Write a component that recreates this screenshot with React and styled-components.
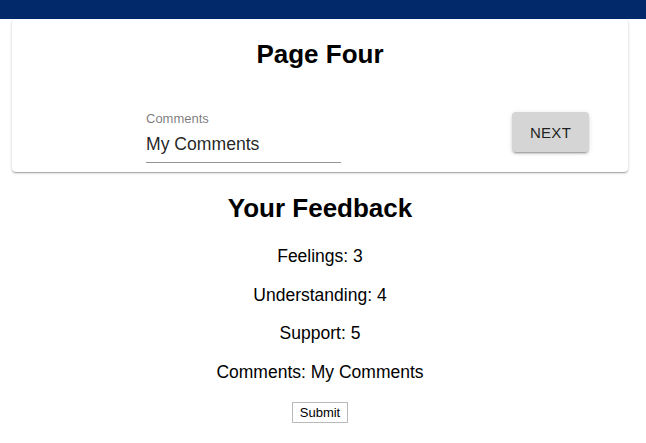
import React from "react";
import styled, { createGlobalStyle } from "styled-components";

const GlobalStyle = createGlobalStyle`
  html, body { margin: 0; padding: 0; background: #fff; }
  body { font-family: "Liberation Sans", Arial, Helvetica, sans-serif; color: #000; }
`;

const Page = styled.div`
  display: flex;
  flex-direction: column;
  width: 640px;
`;

const TopBar = styled.header`
  width: 646px;
  height: 19px;
  background: #022a6b;
`;

const Card = styled.section`
  margin: 0 12px;
  padding: 20px 0 9px;
  background: #fff;
  border-radius: 4px;
  box-shadow: 0px 1px 3px 0px rgba(0,0,0,0.2), 0px 1px 1px 0px rgba(0,0,0,0.14), 0px 2px 1px -1px rgba(0,0,0,0.12);
  display: flex;
  flex-direction: column;
`;

const Heading = styled.h2`
  margin: 0;
  font-size: 26px;
  line-height: 30px;
  font-weight: 700;
  text-align: center;
  color: #000;
`;

const FormRow = styled.div`
  margin-top: 42px;
  padding: 0 39px 0 134px;
  display: flex;
  justify-content: space-between;
  align-items: flex-start;
`;

const Field = styled.label`
  display: flex;
  flex-direction: column;
  width: 195px;
  gap: 8px;
`;

const FieldLabel = styled.span`
  font-size: 13px;
  line-height: 15px;
  color: rgba(0,0,0,0.54);
`;

const FieldInput = styled.input`
  font-family: inherit;
  font-size: 17.6px;
  line-height: 20px;
  height: 20px;
  padding: 0 0 8px;
  margin: 0;
  border: 0;
  border-bottom: 1px solid rgba(0,0,0,0.42);
  outline: none;
  color: rgba(0,0,0,0.87);
  background: transparent;
  box-sizing: content-box;
  width: 100%;
`;

const NextButton = styled.button`
  margin-top: 1px;
  width: 77px;
  height: 40px;
  border: 0;
  border-radius: 4px;
  background: #d5d5d5;
  color: rgba(0,0,0,0.87);
  font-family: inherit;
  font-size: 15px;
  letter-spacing: 0.3px;
  box-shadow: 0px 3px 1px -2px rgba(0,0,0,0.2), 0px 2px 2px 0px rgba(0,0,0,0.14), 0px 1px 5px 0px rgba(0,0,0,0.12);
  cursor: pointer;
`;

const Review = styled.section`
  display: flex;
  flex-direction: column;
  align-items: center;
  padding-top: 21px;
`;

const ReviewLine = styled.p`
  margin: 0;
  font-size: 17.5px;
  line-height: 20px;
  & + & { margin-top: 18.5px; }
  &:first-of-type { margin-top: 23px; }
`;

const SubmitButton = styled.button`
  margin-top: 20px;
  font-family: inherit;
  font-size: 13px;
  line-height: 15px;
  padding: 2px 7px;
  border: 1px solid #b9b9b9;
  background: #fff;
  color: #000;
  border-radius: 0;
`;

export default function App() {
  const feedback = [
    ["Feelings", 3],
    ["Understanding", 4],
    ["Support", 5],
    ["Comments", "My Comments"],
  ];
  return (
    <>
      <GlobalStyle />
      <Page>
        <TopBar />
        <Card>
          <Heading>Page Four</Heading>
          <FormRow>
            <Field>
              <FieldLabel>Comments</FieldLabel>
              <FieldInput defaultValue="My Comments" />
            </Field>
            <NextButton>NEXT</NextButton>
          </FormRow>
        </Card>
        <Review>
          <Heading>Your Feedback</Heading>
          {feedback.map(([k, v]) => (
            <ReviewLine key={k}>
              {k}: {v}
            </ReviewLine>
          ))}
          <SubmitButton>Submit</SubmitButton>
        </Review>
      </Page>
    </>
  );
}
